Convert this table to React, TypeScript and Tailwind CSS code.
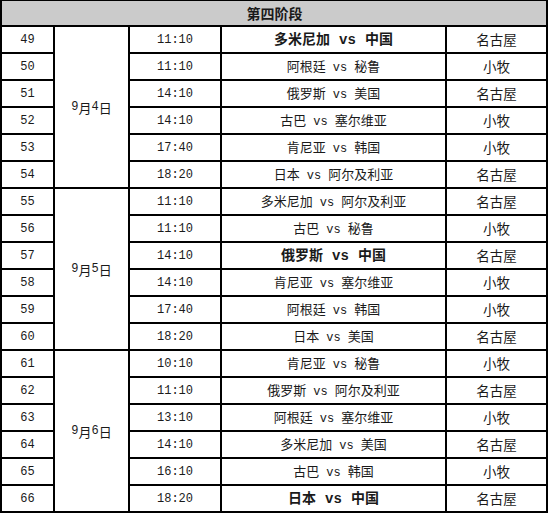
import React from 'react';

type Match = { no: number; time: string; home: string; away: string; venue: string; bold?: boolean };

const groups: { date: string; matches: Match[] }[] = [
  {
    date: '9月4日',
    matches: [
      { no: 49, time: '11:10', home: '多米尼加', away: '中国', venue: '名古屋', bold: true },
      { no: 50, time: '11:10', home: '阿根廷', away: '秘鲁', venue: '小牧' },
      { no: 51, time: '14:10', home: '俄罗斯', away: '美国', venue: '名古屋' },
      { no: 52, time: '14:10', home: '古巴', away: '塞尔维亚', venue: '小牧' },
      { no: 53, time: '17:40', home: '肯尼亚', away: '韩国', venue: '小牧' },
      { no: 54, time: '18:20', home: '日本', away: '阿尔及利亚', venue: '名古屋' },
    ],
  },
  {
    date: '9月5日',
    matches: [
      { no: 55, time: '11:10', home: '多米尼加', away: '阿尔及利亚', venue: '名古屋' },
      { no: 56, time: '11:10', home: '古巴', away: '秘鲁', venue: '小牧' },
      { no: 57, time: '14:10', home: '俄罗斯', away: '中国', venue: '名古屋', bold: true },
      { no: 58, time: '14:10', home: '肯尼亚', away: '塞尔维亚', venue: '小牧' },
      { no: 59, time: '17:40', home: '阿根廷', away: '韩国', venue: '小牧' },
      { no: 60, time: '18:20', home: '日本', away: '美国', venue: '名古屋' },
    ],
  },
  {
    date: '9月6日',
    matches: [
      { no: 61, time: '10:10', home: '肯尼亚', away: '秘鲁', venue: '小牧' },
      { no: 62, time: '11:10', home: '俄罗斯', away: '阿尔及利亚', venue: '名古屋' },
      { no: 63, time: '13:10', home: '阿根廷', away: '塞尔维亚', venue: '小牧' },
      { no: 64, time: '14:10', home: '多米尼加', away: '美国', venue: '名古屋' },
      { no: 65, time: '16:10', home: '古巴', away: '韩国', venue: '小牧' },
      { no: 66, time: '18:20', home: '日本', away: '中国', venue: '名古屋', bold: true },
    ],
  },
];

const cell = 'bg-white flex items-center justify-center';
const mono = "font-['Liberation_Mono','Noto_Sans_CJK_SC',monospace] text-[12px]";

export default function App() {
  return (
    <div className="bg-white w-[549px] h-[515px] text-[#1a1a1a] font-['Noto_Sans_CJK_SC',sans-serif]">
      <div className="grid w-fit bg-black gap-[2px] pt-px px-[2px] pb-[2px] grid-cols-[51px_73px_90px_223px_99px] grid-rows-[24px_repeat(18,25px)]">
        {/* Header */}
        <div className="col-span-5 bg-[#cbcbcb] flex items-center justify-center text-[14px] font-bold pl-px">
          第四阶段
        </div>

        {groups.map((g) =>
          g.matches.map((m, i) => (
            <React.Fragment key={m.no}>
              <div className={`${cell} ${mono}`}>{m.no}</div>
              {i === 0 && (
                <div className={`${cell} row-span-6 text-[13px] leading-none`}>
                  <span className="font-['Liberation_Mono',monospace] text-[12px]">{g.date[0]}</span>
                  {g.date.slice(1, 2)}
                  <span className="font-['Liberation_Mono',monospace] text-[12px]">{g.date[2]}</span>
                  {g.date.slice(3)}
                </div>
              )}
              <div className={`${cell} ${mono}`}>{m.time}</div>
              {m.bold ? (
                <div className={`${cell} text-[14px] font-bold`}>
                  <p>
                    {m.home}
                    <span className="font-['Liberation_Mono',monospace] text-[14px] mx-[9px]">vs</span>
                    {m.away}
                  </p>
                </div>
              ) : (
                <div className={`${cell} text-[13px]`}>
                  <p>
                    {m.home}
                    <span className="font-['Liberation_Mono',monospace] text-[12px] mx-[7px]">vs</span>
                    {m.away}
                  </p>
                </div>
              )}
              <div className={`${cell} text-[13.5px]`}>{m.venue}</div>
            </React.Fragment>
          ))
        )}
      </div>
    </div>
  );
}
